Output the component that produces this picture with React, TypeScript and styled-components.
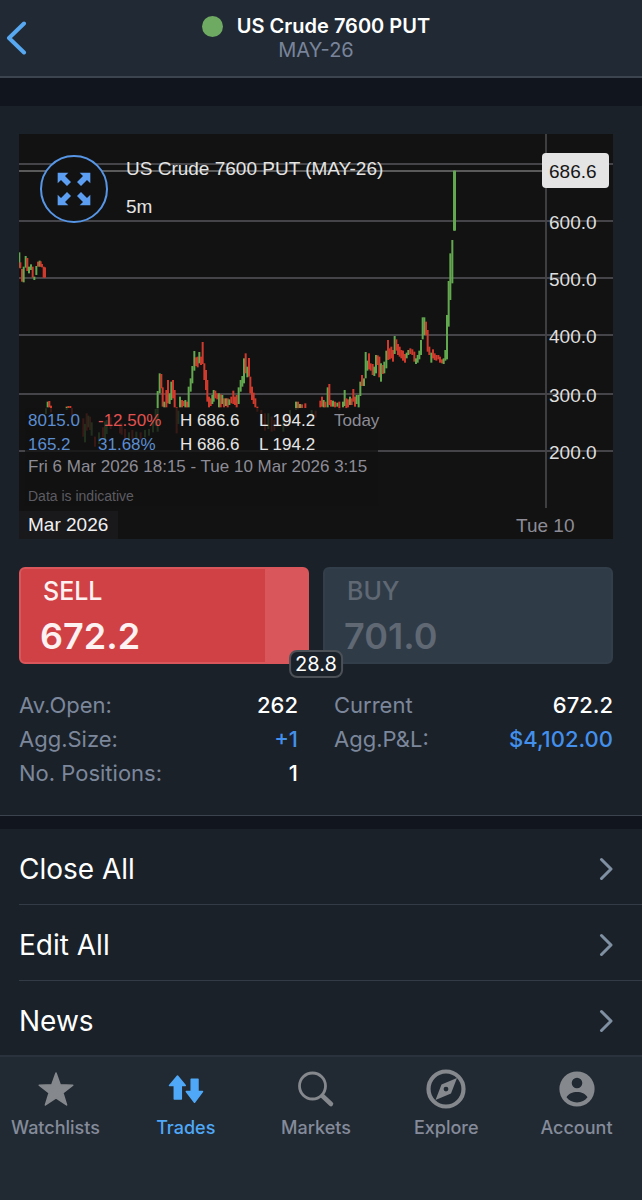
import React from 'react';
import styled, { createGlobalStyle } from 'styled-components';

const GlobalStyle = createGlobalStyle`
  *, *::before, *::after { box-sizing: border-box; }
  body {
    margin: 0;
    background: #1a2129;
    color: #ffffff;
    font-family: Inter, "Liberation Sans", sans-serif;
  }
  button { font: inherit; cursor: pointer; }
`;

const Page = styled.div`
  display: flex;
  flex-direction: column;
  min-height: 100vh;
`;

const Header = styled.header`
  display: grid;
  grid-template-columns: 40px 1fr 40px;
  align-items: center;
  height: 78px;
  padding-right: 10px;
  background: #212a34;
  border-bottom: 2px solid #3b444f;
`;

const BackButton = styled.button`
  display: flex;
  padding: 0 0 0 6px;
  border: 0;
  background: none;
  color: #57a7f1;
`;

const Titles = styled.div`
  display: flex;
  flex-direction: column;
  align-items: center;
`;

const TitleLine = styled.div`
  display: flex;
  align-items: center;
  gap: 14px;
`;

const StatusDot = styled.span`
  width: 21px;
  height: 21px;
  border-radius: 50%;
  background: #6faa62;
`;

const Title = styled.h1`
  margin: 0;
  font-size: 20px;
  line-height: 24px;
  font-weight: 600;
`;

const Subtitle = styled.p`
  margin: 0;
  font-size: 20px;
  line-height: 24px;
  color: #79849a;
`;

const Band = styled.div<{ $height: number }>`
  height: ${(p) => p.$height}px;
  background: #11151e;
`;

const Overview = styled.main`
  padding: 28px 29px 25px 19px;
  border-bottom: 1px solid #3a434e;
`;

const ChartPanel = styled.section`
  position: relative;
  background: #121212;
  font-family: "Liberation Sans", Arial, sans-serif;
  font-size: 19px;
`;

const ChartSvg = styled.svg`
  display: block;
  width: 100%;
  height: auto;
`;

const ChartHeading = styled.div`
  position: absolute;
  top: 16px;
  left: 21px;
  display: flex;
  gap: 18px;
  color: #e4e4e4;
  line-height: 38px;
`;

const ExpandButton = styled.button`
  display: flex;
  align-items: center;
  justify-content: center;
  width: 68px;
  height: 68px;
  margin-top: 5px;
  padding: 0;
  border: 2px solid #5796e6;
  border-radius: 50%;
  background: #121212;
  color: #5c9ff2;
`;

const Legend = styled.div`
  position: absolute;
  top: 274px;
  left: 6px;
  width: 353px;
  padding: 1px 0 0 3px;
  background: rgba(18, 18, 18, 0.8);
  color: #8d8c96;
  font-size: 17px;
  line-height: 20px;
`;

const LegendRow = styled.div`
  display: grid;
  grid-template-columns: 70px 82px 79px 75px auto;
  line-height: 24px;
`;

const LegendValue = styled.span<{ $tone: 'blue' | 'red' | 'light' | 'grey' }>`
  color: ${(p) => ({ blue: '#5b8ed2', red: '#e25250', light: '#e6e6e6', grey: '#8d8c96' })[p.$tone]};
`;

const Disclaimer = styled.div`
  margin-top: 9px;
  color: #5d5c62;
  font-size: 14px;
`;

const MonthTag = styled.div`
  position: absolute;
  left: 0;
  bottom: 0;
  padding: 0 10px 0 9px;
  background: #19191c;
  color: #f0f0f0;
  line-height: 28px;
`;

const Quotes = styled.div`
  position: relative;
  display: grid;
  grid-template-columns: 1fr 1fr;
  gap: 14px;
  margin-top: 28px;
`;

const QuoteButton = styled.button<{ $side: 'sell' | 'buy' }>`
  height: 97px;
  padding: 0 19px;
  border: 2px solid ${(p) => (p.$side === 'sell' ? '#d9575b' : '#333e4b')};
  border-radius: 6px;
  background: ${(p) =>
    p.$side === 'sell'
      ? 'linear-gradient(to left, #d9575b 42px, #d04146 42px)'
      : '#303b48'};
  color: ${(p) => (p.$side === 'sell' ? '#fdf1f1' : '#5f6873')};
  text-align: left;
`;

const QuoteSide = styled.span`
  display: block;
  padding-left: 3px;
  font-size: 25px;
  line-height: 40px;
  font-weight: 500;
`;

const QuotePrice = styled.span`
  display: block;
  font-size: 36px;
  line-height: 50px;
  font-weight: 600;
`;

const Spread = styled.span`
  position: absolute;
  left: 50%;
  bottom: -14px;
  transform: translateX(-50%);
  padding: 0 4px;
  border: 2px solid #4c5057;
  border-radius: 8px;
  background: #1a2129;
  font-size: 20px;
  line-height: 24px;
`;

const Stats = styled.dl`
  display: grid;
  grid-template-columns: 1fr 1fr;
  column-gap: 36px;
  margin: 24px 0 0;
  font-size: 22px;
  line-height: 34px;
`;

const Stat = styled.div`
  display: flex;
  justify-content: space-between;
`;

const StatLabel = styled.dt`
  color: #7c879b;
`;

const StatValue = styled.dd<{ $blue?: boolean }>`
  margin: 0;
  color: ${(p) => (p.$blue ? '#4390ec' : '#ffffff')};
  font-weight: 500;
`;

const Menu = styled.nav`
  flex: 1;
  padding-left: 19px;
`;

const MenuButton = styled.button`
  display: flex;
  align-items: center;
  justify-content: space-between;
  width: 100%;
  height: 76px;
  padding: 4px 29px 0 0;
  border: 0;
  border-bottom: 1px solid #323b46;
  background: none;
  color: #ffffff;
  font-size: 28px;
  text-align: left;

  &:last-child { border-bottom: 0; }
`;

const TabBar = styled.nav`
  display: flex;
  justify-content: space-between;
  height: 145px;
  margin-top: -2px;
  padding: 12px 10px 0 0;
  border-top: 2px solid #29323d;
  background: #212a33;
`;

const Tab = styled.a<{ $active?: boolean }>`
  display: flex;
  flex-direction: column;
  align-items: center;
  gap: 8px;
  width: 111px;
  color: ${(p) => (p.$active ? '#4fa8f8' : '#858b9a')};
  font-size: 18px;
  line-height: 22px;
  font-weight: 500;
  text-decoration: none;
`;

const TabIcon = styled.svg<{ $active?: boolean }>`
  width: 40px;
  height: 40px;
  color: ${(p) => (p.$active ? '#4fa8f8' : '#85888c')};
`;

type Candle = [x: number, high: number, low: number, up: 0 | 1];

/* Candle coordinates are in thirds of a chart unit. */
const FRIDAY: Candle[] = [
  [1, 355, 401, 1], [4, 385, 403, 0], [9, 405, 443, 0], [14, 398, 445, 1], [20, 366, 401, 1],
  [25, 372, 411, 0], [30, 398, 418, 1], [36, 391, 408, 1], [41, 398, 431, 0], [46, 428, 438, 1],
  [52, 396, 423, 1], [57, 383, 398, 0], [62, 380, 398, 1], [65, 382, 398, 0], [69, 390, 400, 0],
  [74, 398, 431, 0], [78, 400, 431, 0],
];

const MONDAY: Candle[] = [
  [86, 803, 820, 1], [91, 801, 820, 0], [96, 815, 835, 0], [81, 823, 840, 1], [143, 818, 828, 1],
  [148, 816, 822, 0], [154, 816, 822, 0], [159, 822, 845, 0], [193, 853, 908, 0], [198, 870, 925, 1],
  [203, 838, 890, 0], [208, 845, 880, 1], [213, 848, 888, 0], [218, 865, 905, 1], [228, 908, 938, 0],
  [240, 895, 930, 1], [252, 880, 910, 0], [258, 862, 915, 1], [263, 858, 900, 1], [275, 850, 885, 0],
  [303, 868, 898, 0], [308, 868, 902, 0], [318, 885, 918, 0], [330, 895, 918, 1], [340, 888, 915, 0],
  [352, 893, 912, 1], [365, 895, 915, 0], [378, 888, 910, 1], [390, 885, 905, 1], [402, 860, 895, 1],
  [410, 825, 875, 1],
  [416, 771, 893, 1], [422, 718, 778, 1], [427, 720, 763, 0], [431, 760, 818, 0], [436, 803, 820, 1],
  [442, 768, 820, 0], [447, 738, 808, 0], [452, 778, 810, 1], [457, 743, 798, 1], [462, 738, 793, 0],
  [467, 768, 820, 0], [473, 820, 898, 0], [478, 830, 870, 1], [483, 788, 820, 1], [489, 798, 820, 0],
  [494, 801, 816, 0], [499, 798, 820, 1], [504, 803, 820, 0], [509, 758, 820, 1], [515, 733, 773, 1],
  [520, 696, 748, 1], [526, 651, 710, 1], [531, 670, 696, 0], [536, 668, 700, 0], [541, 654, 688, 1],
  [546, 668, 693, 0], [551, 624, 690, 0], [556, 688, 738, 0], [561, 708, 768, 0], [565, 738, 803, 0],
  [570, 788, 820, 0], [575, 793, 816, 0], [580, 783, 810, 1], [584, 768, 803, 1], [589, 770, 793, 0],
  [595, 778, 796, 0], [600, 778, 820, 1], [605, 781, 820, 0], [610, 783, 810, 1], [615, 793, 820, 0],
  [621, 793, 816, 1], [626, 793, 820, 0], [631, 796, 813, 1], [637, 788, 808, 0], [643, 770, 810, 0],
  [648, 788, 813, 0], [653, 783, 820, 0], [659, 760, 810, 1], [665, 738, 773, 1], [670, 726, 758, 1],
  [675, 673, 748, 1], [680, 658, 718, 0], [685, 698, 730, 1], [690, 672, 728, 0], [694, 728, 778, 0],
  [699, 758, 798, 0], [704, 776, 810, 0], [709, 793, 820, 0], [715, 818, 833, 0], [727, 828, 870, 0],
  [738, 838, 890, 0], [748, 838, 885, 1], [758, 848, 893, 0], [766, 858, 890, 0], [775, 840, 878, 0],
  [793, 848, 893, 1], [802, 838, 880, 0], [813, 828, 868, 1],
];

const TUESDAY: Candle[] = [
  [831, 803, 828, 1], [837, 803, 826, 0], [843, 810, 822, 1], [849, 811, 822, 0], [859, 808, 822, 0],
  [878, 828, 848, 1], [890, 830, 850, 0],
  [904, 800, 820, 0], [909, 788, 818, 0],
  [914, 798, 820, 1], [919, 803, 820, 0], [926, 760, 820, 1], [931, 750, 813, 0], [936, 798, 818, 0],
  [942, 800, 818, 1], [948, 803, 820, 0], [955, 806, 818, 1], [961, 803, 828, 0], [972, 803, 820, 1],
  [977, 768, 816, 1], [982, 793, 823, 0], [987, 796, 820, 0], [993, 788, 813, 1], [998, 793, 813, 0],
  [1003, 765, 803, 0], [1008, 788, 818, 0], [1013, 783, 810, 1], [1019, 783, 820, 1], [1024, 743, 786, 1],
  [1029, 723, 756, 0], [1035, 733, 756, 1], [1040, 654, 733, 1], [1045, 680, 710, 1], [1050, 658, 706, 0],
  [1055, 688, 710, 0], [1061, 690, 723, 0], [1066, 698, 726, 1], [1071, 663, 718, 1], [1076, 664, 693, 0],
  [1081, 668, 730, 0], [1086, 688, 743, 1], [1091, 693, 720, 0], [1096, 683, 718, 1], [1102, 650, 703, 1],
  [1107, 618, 678, 0], [1112, 643, 676, 0], [1117, 638, 673, 0], [1122, 648, 683, 0], [1127, 606, 660, 1],
  [1132, 616, 650, 0], [1137, 630, 663, 0], [1142, 638, 668, 0], [1147, 648, 673, 0], [1152, 650, 680, 0],
  [1158, 660, 686, 0], [1163, 656, 673, 1], [1168, 648, 663, 1], [1174, 643, 660, 0], [1180, 646, 663, 0],
  [1186, 653, 683, 0], [1191, 673, 690, 1], [1196, 663, 686, 1], [1201, 650, 676, 1], [1206, 618, 663, 1],
  [1211, 550, 616, 1], [1216, 550, 603, 1], [1221, 563, 603, 0], [1226, 588, 653, 0], [1231, 638, 663, 0],
  [1237, 656, 686, 1], [1242, 646, 673, 0], [1247, 658, 678, 0], [1252, 663, 680, 0], [1258, 663, 676, 0],
  [1263, 668, 686, 0], [1269, 676, 688, 0], [1274, 673, 690, 1], [1279, 648, 680, 1], [1284, 543, 676, 1],
  [1289, 441, 578, 1], [1294, 358, 498, 1], [1300, 318, 448, 1], [1305, 110, 290, 1], [1308, 110, 290, 1],
];

const CANDLES = [...FRIDAY, ...MONDAY, ...TUESDAY];

const GRID = [
  { y: 87, label: '600.0' },
  { y: 144, label: '500.0' },
  { y: 201, label: '400.0' },
  { y: 260, label: '300.0' },
  { y: 317, label: '200.0' },
];

function PriceChart() {
  return (
    <ChartSvg viewBox="0 0 594 405" role="img" aria-label="Five minute price chart">
      <g stroke="#454448" strokeWidth="1.8">
        <path d="M0 30H594" />
        {GRID.map((g) => (
          <path key={g.y} d={`M0 ${g.y}H594`} />
        ))}
        <path d="M527 0V374" />
      </g>
      <path d="M0 37H527" stroke="#737373" strokeWidth="1.6" />
      <g transform="scale(0.33333)">
        {CANDLES.map(([x, high, low, up], i) => (
          <rect key={i} x={x - 3} y={high} width="6" height={low - high} fill={up ? '#62a84e' : '#cf3a2c'} />
        ))}
      </g>
      <g fill="#dedede" fontSize="19">
        {GRID.map((g) => (
          <text key={g.y} x="530" y={g.y + 8}>{g.label}</text>
        ))}
      </g>
      <rect x="523" y="19" width="67" height="35" rx="4" fill="#e4e4e4" />
      <text x="530" y="44" fontSize="19" fill="#161616">686.6</text>
      <text x="497" y="398" fontSize="19" fill="#8d8c96">Tue 10</text>
    </ChartSvg>
  );
}

const ARROW = 'M-49-49H-17L-27-39L-9-21L-21-9L-39-27L-49-17Z';

function ExpandIcon() {
  return (
    <svg width="34" height="34" viewBox="-51 -51 102 102" fill="currentColor" aria-hidden="true">
      {[0, 90, 180, 270].map((a) => (
        <path key={a} d={ARROW} transform={`rotate(${a})`} />
      ))}
    </svg>
  );
}

const TABS = [
  {
    label: 'Watchlists',
    icon: (
      <path
        d="M20 4L24.200 15.800L36.800 16.200L26.900 23.900L30.600 36L20 28.900L9.400 36L13.100 23.900L3.200 16.200L15.800 15.800Z"
        fill="currentColor"
        stroke="currentColor"
        strokeWidth="1.500"
        strokeLinejoin="round"
      />
    ),
  },
  {
    label: 'Trades',
    active: true,
    icon: (
      <path
        d="M11.500 7L19.300 16.500H15.300V30H8.300V16.500H3.500ZM25.200 10.300H32V22.500H36.500L28.500 33.300L20.300 22.500H25.200Z"
        fill="currentColor"
        stroke="currentColor"
        strokeWidth="1.500"
        strokeLinejoin="round"
      />
    ),
  },
  {
    label: 'Markets',
    icon: (
      <g fill="none" stroke="currentColor" strokeLinecap="round">
        <circle cx="16.500" cy="17" r="13" strokeWidth="2.800" />
        <path d="M26.500 27L35 35" strokeWidth="4.500" />
      </g>
    ),
  },
  {
    label: 'Explore',
    icon: (
      <g>
        <circle cx="20" cy="20" r="17.500" fill="none" stroke="currentColor" strokeWidth="4.200" />
        <path
          d="M31 9L25 24.500L9.500 31L15.500 15.500ZM20 17.700A2.400 2.400 0 1 0 20 22.500A2.400 2.400 0 1 0 20 17.700Z"
          fill="currentColor"
          fillRule="evenodd"
        />
      </g>
    ),
  },
  {
    label: 'Account',
    icon: (
      <path
        d="M20 2.400A17.600 17.600 0 1 0 20 37.600A17.600 17.600 0 1 0 20 2.400ZM20 8.700A5.300 5.300 0 1 1 20 19.300A5.300 5.300 0 1 1 20 8.700ZM9.500 28.300C11.500 24.600 15.500 23 20 23S28.500 24.600 30.500 28.300C28 31.600 24.500 33.400 20 33.400S12 31.600 9.500 28.300Z"
        fill="currentColor"
        fillRule="evenodd"
      />
    ),
  },
];

const STATS = [
  { label: 'Av.Open:', value: '262' },
  { label: 'Current', value: '672.2' },
  { label: 'Agg.Size:', value: '+1', blue: true },
  { label: 'Agg.P&L:', value: '$4,102.00', blue: true },
  { label: 'No. Positions:', value: '1' },
];

export default function App() {
  return (
    <>
      <GlobalStyle />
      <Page>
        <Header>
          <BackButton aria-label="Back">
            <svg width="21" height="34" viewBox="0 0 21 34" fill="none" stroke="currentColor" strokeWidth="4" strokeLinecap="round" strokeLinejoin="round" aria-hidden="true">
              <path d="M18 2.500L3 17L18 31.500" />
            </svg>
          </BackButton>
          <Titles>
            <TitleLine>
              <StatusDot />
              <Title>US Crude 7600 PUT</Title>
            </TitleLine>
            <Subtitle>MAY-26</Subtitle>
          </Titles>
        </Header>
        <Band $height={28} />

        <Overview>
          <ChartPanel>
            <PriceChart />
            <ChartHeading>
              <ExpandButton aria-label="Expand chart">
                <ExpandIcon />
              </ExpandButton>
              <div>
                <div>US Crude 7600 PUT (MAY-26)</div>
                <div>5m</div>
              </div>
            </ChartHeading>
            <Legend>
              <LegendRow>
                <LegendValue $tone="blue">8015.0</LegendValue>
                <LegendValue $tone="red">-12.50%</LegendValue>
                <LegendValue $tone="light">H 686.6</LegendValue>
                <LegendValue $tone="light">L 194.2</LegendValue>
                <LegendValue $tone="grey">Today</LegendValue>
              </LegendRow>
              <LegendRow>
                <LegendValue $tone="blue">165.2</LegendValue>
                <LegendValue $tone="blue">31.68%</LegendValue>
                <LegendValue $tone="light">H 686.6</LegendValue>
                <LegendValue $tone="light">L 194.2</LegendValue>
              </LegendRow>
              <div>Fri 6 Mar 2026 18:15 - Tue 10 Mar 2026 3:15</div>
              <Disclaimer>Data is indicative</Disclaimer>
            </Legend>
            <MonthTag>Mar 2026</MonthTag>
          </ChartPanel>

          <Quotes>
            <QuoteButton $side="sell">
              <QuoteSide>SELL</QuoteSide>
              <QuotePrice>672.2</QuotePrice>
            </QuoteButton>
            <QuoteButton $side="buy">
              <QuoteSide>BUY</QuoteSide>
              <QuotePrice>701.0</QuotePrice>
            </QuoteButton>
            <Spread>28.8</Spread>
          </Quotes>

          <Stats>
            {STATS.map((s) => (
              <Stat key={s.label}>
                <StatLabel>{s.label}</StatLabel>
                <StatValue $blue={s.blue}>{s.value}</StatValue>
              </Stat>
            ))}
          </Stats>
        </Overview>
        <Band $height={13} />

        <Menu aria-label="Position actions">
          {['Close All', 'Edit All', 'News'].map((label) => (
            <MenuButton key={label}>
              {label}
              <svg width="14" height="24" viewBox="0 0 14 24" fill="none" stroke="#8090a3" strokeWidth="3" strokeLinecap="round" strokeLinejoin="round" aria-hidden="true">
                <path d="M2.500 2.500L12 12L2.500 21.500" />
              </svg>
            </MenuButton>
          ))}
        </Menu>

        <TabBar aria-label="Main">
          {TABS.map((t) => (
            <Tab key={t.label} href={`#${t.label.toLowerCase()}`} $active={t.active} aria-current={t.active ? 'page' : undefined}>
              <TabIcon viewBox="0 0 40 40" $active={t.active} aria-hidden="true">
                {t.icon}
              </TabIcon>
              {t.label}
            </Tab>
          ))}
        </TabBar>
      </Page>
    </>
  );
}
